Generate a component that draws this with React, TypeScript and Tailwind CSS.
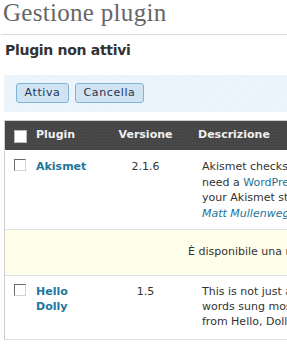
import React from "react";

const sans = { fontFamily: '"DejaVu Sans", Verdana, sans-serif' };

function Box({ header }: { header?: boolean }) {
  return header ? (
    <div className="w-[13px] h-[13px] bg-white border border-[#bbb]" />
  ) : (
    <div className="w-[12px] h-[12px] bg-white border border-t-[#6a6a6a] border-l-[#6a6a6a] border-r-[#d4d4d4] border-b-[#d4d4d4]" />
  );
}

export default function App() {
  return (
    <div
      className="w-[287px] h-[346px] overflow-hidden bg-white text-[#333]"
      style={sans}
    >
      <div
        className="h-[35px] ml-[1px] border-b border-[#dadada] text-[25px] leading-[25px] tracking-[0.3px] text-[#666] pl-[2px]"
        style={{ fontFamily: '"Liberation Serif", Georgia, serif' }}
      >
        Gestione plugin
      </div>
      <div className="pl-[4px]">
        <div className="h-[40px] pt-[7px] text-[14px] leading-[17px] font-bold tracking-[-0.3px] text-[#333] pl-[1px]">
          Plugin non attivi
        </div>
        <div className="h-[37px] w-[400px] pt-[8px] pl-[12px] flex gap-[6px] bg-[#eaf3fa] bg-[repeating-linear-gradient(135deg,#e6f1f9_0px,#e6f1f9_1px,#edf6fc_1px,#edf6fc_3px)]">
          <div className="w-[53px] h-[20px] rounded-[3px] border border-[#80b4d6] bg-[#cfe3f2] text-[#1f3550] text-[11px] leading-[18px] tracking-[0.6px] flex justify-center">
            Attiva
          </div>
          <div className="w-[69px] h-[20px] rounded-[3px] border border-[#80b4d6] bg-[#cfe3f2] text-[#1f3550] text-[11px] leading-[18px] tracking-[0.6px] flex justify-center">
            Cancella
          </div>
        </div>
        <div className="mt-[8px] w-[600px] border-l border-[#cfcfcf]">
          {/* header */}
          <div className="h-[30px] border-t border-[#cfcfcf] bg-[#464646] bg-[radial-gradient(#4f4f4f_0.8px,transparent_0.8px)] bg-[length:3px_3px] flex items-center text-[11px] font-bold text-[#f0f0f0] whitespace-nowrap">
            <div className="w-[25px] shrink-0 pl-[9px] pt-[1px]">
              <Box header />
            </div>
            <div className="w-[80px] shrink-0 pl-[6px]">Plugin</div>
            <div className="w-[71px] shrink-0 text-center">Versione</div>
            <div className="pl-[17px]">Descrizione</div>
          </div>
          {/* row 1 */}
          <div className="h-[80px] border-b border-[#dfdfdf] flex text-[11px] leading-[15.5px] whitespace-nowrap">
            <div className="w-[25px] shrink-0 pl-[9px] pt-[9px]">
              <Box />
            </div>
            <div className="w-[80px] shrink-0 pl-[6px] pt-[9px] font-bold text-[#21759b]">
              Akismet
            </div>
            <div className="w-[71px] shrink-0 pt-[9px] text-center">2.1.6</div>
            <div className="pl-[21px] pt-[9px]">
              <div>
                Akismet checks your comments against the Akismet web service
              </div>
              <div>
                need a <span className="text-[#21759b]">WordPress.com API key</span> to use it.
              </div>
              <div>your Akismet stats just put in your template.</div>
              <div>
                <span className="italic text-[#21759b]">Matt Mullenweg</span>.
              </div>
            </div>
          </div>
          {/* update row */}
          <div className="h-[46px] border-b border-[#dfdfdf] bg-[#fffeeb] flex items-center text-[11px] whitespace-nowrap pl-[183px]">
            È disponibile una nuova versione di Akismet.
          </div>
          {/* row 2 */}
          <div className="h-[64px] border-b border-[#dfdfdf] flex text-[11px] leading-[15px] whitespace-nowrap">
            <div className="w-[25px] shrink-0 pl-[9px] pt-[8px]">
              <Box />
            </div>
            <div className="w-[80px] shrink-0 pl-[6px] pt-[8px] font-bold text-[#21759b]">
              <div>Hello</div>
              <div>Dolly</div>
            </div>
            <div className="w-[71px] shrink-0 pt-[8px] text-center">1.5</div>
            <div className="pl-[21px] pt-[8px]">
              <div>This is not just a plugin, it symbolizes the hope</div>
              <div>words sung most famously by Louis Armstrong</div>
              <div>from Hello, Dolly in the upper right of your admin</div>
            </div>
          </div>
        </div>
      </div>
    </div>
  );
}
